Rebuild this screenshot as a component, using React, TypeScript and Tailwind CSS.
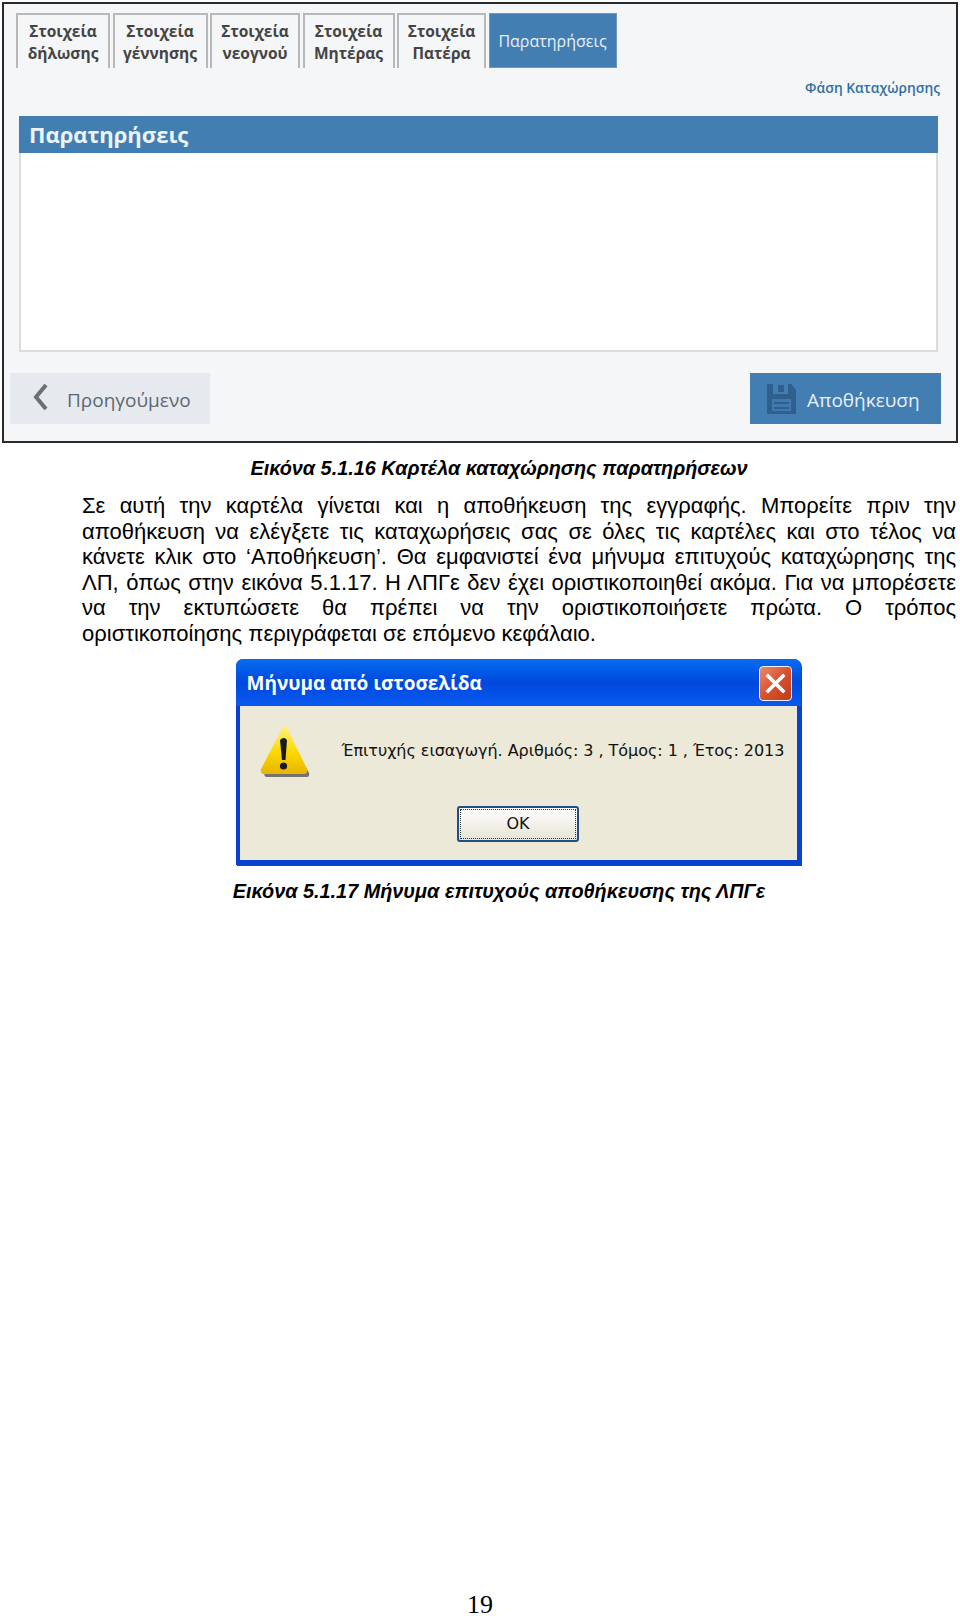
const tabs = [
  { top: "Στοιχεία", bottom: "δήλωσης", width: "w-[94px]" },
  { top: "Στοιχεία", bottom: "γέννησης", width: "w-[95px]" },
  { top: "Στοιχεία", bottom: "νεογνού", width: "w-[90px]" },
  { top: "Στοιχεία", bottom: "Μητέρας", width: "w-[92px]" },
  { top: "Στοιχεία", bottom: "Πατέρα", width: "w-[89px]" },
];

const justifiedLines = [
  "Σε αυτή την καρτέλα γίνεται και η αποθήκευση της εγγραφής. Μπορείτε πριν την",
  "αποθήκευση να ελέγξετε τις καταχωρήσεις σας σε όλες τις καρτέλες και στο τέλος να",
  "κάνετε κλικ στο ‘Αποθήκευση’. Θα εμφανιστεί ένα μήνυμα επιτυχούς καταχώρησης της",
  "ΛΠ, όπως στην εικόνα 5.1.17. Η ΛΠΓε δεν έχει οριστικοποιηθεί ακόμα. Για να μπορέσετε",
  "να την εκτυπώσετε θα πρέπει να την οριστικοποιήσετε πρώτα. Ο τρόπος",
];

function SaveIcon() {
  return (
    <svg width="29" height="30" viewBox="0 0 29 30" className="shrink-0">
      <path d="M0 0h6v10h15V0h3l5 6v24H0z" fill="#2f5f8c" />
      <rect x="11" y="1" width="6" height="7" fill="#2f5f8c" />
      <rect x="5" y="15" width="19" height="12" fill="#4079b0" />
      <rect x="7" y="18" width="15" height="2" fill="#2f5f8c" />
      <rect x="7" y="23" width="15" height="2" fill="#2f5f8c" />
    </svg>
  );
}

function WarningIcon() {
  return (
    <svg width="50" height="52" viewBox="0 0 50 52" className="shrink-0">
      <defs>
        <linearGradient id="warn" x1="0" y1="0" x2="0" y2="1">
          <stop offset="0" stopColor="#fff27a" />
          <stop offset="0.55" stopColor="#fbd800" />
          <stop offset="1" stopColor="#e8b400" />
        </linearGradient>
      </defs>
      <path d="M25 4 49 47Q50 51 46 51H8Q3 51 5 47Z" fill="#4a4a50" opacity="0.75" />
      <path d="M23 1Q25 -1 27 2L47 43Q48 48 44 48H4Q0 48 1 43Z" fill="url(#warn)" />
      <path d="M20 14Q24 10 27 14L25.5 34H22Z" fill="#1a1a1a" />
      <circle cx="23.5" cy="40" r="3.6" fill="#1a1a1a" />
    </svg>
  );
}

function MessageDialog() {
  return (
    <div className="ml-[-2px] mt-[12px] flex h-[206px] w-[565px] flex-col rounded-t-[7px] bg-[#0a3fd0] shadow-[1px_1px_0_#444]">
      <div className="flex h-[47px] items-center justify-between rounded-t-[7px] bg-gradient-to-b from-[#0a6cf0] via-[#0048de] to-[#0a5af0] pl-[11px] pr-[9px] pt-[3px]">
        <span className="font-['Open_Sans',sans-serif] text-[19px] font-bold text-white">Μήνυμα από ιστοσελίδα</span>
        <div className="flex h-[35px] w-[33px] items-center justify-center rounded-[4px] border border-[#f3f3f3] bg-gradient-to-br from-[#e98a6c] via-[#d8512e] to-[#c23a18]">
          <svg width="21" height="21" viewBox="0 0 21 21">
            <path d="M3 3 18 18M18 3 3 18" stroke="#fff" strokeWidth="3.6" strokeLinecap="square" />
          </svg>
        </div>
      </div>
      <div className="mx-[4px] mb-[5px] flex grow flex-col bg-[#ece9d8]">
        <div className="flex pl-[20px] pt-[20px]">
          <WarningIcon />
          <p className="ml-[32px] mt-[13px] whitespace-nowrap font-['DejaVu_Sans',sans-serif] text-[16px] tracking-[-0.05px] text-[#111]">
            Έπιτυχής εισαγωγή. Αριθμός: 3 , Τόμος: 1 , Έτος: 2013
          </p>
        </div>
        <div className="mt-[28px] flex justify-center">
          <button className="h-[36px] w-[122px] rounded-[3px] border-2 border-[#1f4f86] bg-gradient-to-b from-white to-[#e6e3d6] p-[1px]">
            <span className="flex h-full items-center justify-center border border-dotted border-[#333] font-['DejaVu_Sans',sans-serif] text-[16px] text-[#111]">OK</span>
          </button>
        </div>
      </div>
    </div>
  );
}

export default function App() {
  return (
    <div className="flex h-[1616px] w-[960px] flex-col bg-white font-['Liberation_Sans',sans-serif] text-black">
      <div className="mx-[2px] mt-[2px] flex h-[441px] flex-col border-2 border-[#2a2a2a] bg-[#f5f6f7]">
        <div className="flex items-stretch gap-[2.5px] pl-[12px] pt-[9px]">
          {tabs.map((tab) => (
            <div
              key={tab.bottom}
              className={`flex h-[55px] flex-col items-center justify-center border-x-2 border-t-2 border-[#b8b8b8] font-['Open_Sans',sans-serif] text-[15.5px] font-bold leading-[22px] text-[#444] ${tab.width}`}
            >
              <span>{tab.top}</span>
              <span>{tab.bottom}</span>
            </div>
          ))}
          <div className="flex h-[55px] w-[128px] items-center justify-center border border-[#6f98bb] bg-[#427eb2] font-['Open_Sans',sans-serif] text-[16px] text-[#e8f0f7]">
            Παρατηρήσεις
          </div>
        </div>
        <div className="mt-[10px] flex justify-end pr-[16px] font-['Open_Sans',sans-serif] text-[13.8px] font-semibold leading-[20px] text-[#2f6fa6]">
          Φάση Καταχώρησης
        </div>
        <div className="ml-[15px] mr-[18px] mt-[18px] flex h-[236px] flex-col border-x-2 border-b-2 border-[#dcdcdc] bg-white">
          <div className="-mx-[2px] flex h-[37px] items-center bg-[#427eb2] pl-[10px] font-['Open_Sans',sans-serif] text-[22px] font-bold text-[#eef4f9]">
            Παρατηρήσεις
          </div>
        </div>
        <div className="mt-[21px] flex justify-between pl-[6px] pr-[15px]">
          <div className="flex h-[51px] w-[200px] items-center bg-[#e6e9ee] pl-[23px] font-['Open_Sans',sans-serif] text-[19px] text-[#5c6872]">
            <svg width="15" height="28" viewBox="0 0 15 28" className="mb-[4px] shrink-0">
              <path d="M13 2 3 14l10 12" fill="none" stroke="#6c7072" strokeWidth="4" />
            </svg>
            <span className="ml-[19px] mt-[3px]">Προηγούμενο</span>
          </div>
          <div className="flex h-[51px] w-[191px] items-center bg-[#427eb2] pl-[17px] font-['Open_Sans',sans-serif] text-[19px] text-[#e8f0f7]">
            <SaveIcon />
            <span className="ml-[11px] mt-[3px]">Αποθήκευση</span>
          </div>
        </div>
      </div>

      <p className="ml-[38px] mt-[13px] text-center text-[19.85px] font-bold italic leading-[25px]">
        Εικόνα 5.1.16 Καρτέλα καταχώρησης παρατηρήσεων
      </p>

      <div className="ml-[82px] mt-[12px] flex w-[874px] flex-col items-center">
        <div className="w-full text-[22px] leading-[25.6px]">
          {justifiedLines.map((line) => (
            <p key={line} className="whitespace-nowrap text-justify [text-align-last:justify]">{line}</p>
          ))}
          <p>οριστικοποίησης περιγράφεται σε επόμενο κεφάλαιο.</p>
        </div>
        <MessageDialog />
      </div>

      <p className="ml-[38px] mt-[14px] text-center text-[19.85px] font-bold italic leading-[25px]">
        Εικόνα 5.1.17 Μήνυμα επιτυχούς αποθήκευσης της ΛΠΓε
      </p>

      <p className="mt-auto text-center font-['Liberation_Serif',serif] text-[26px] leading-[22px]">19</p>
    </div>
  );
}
